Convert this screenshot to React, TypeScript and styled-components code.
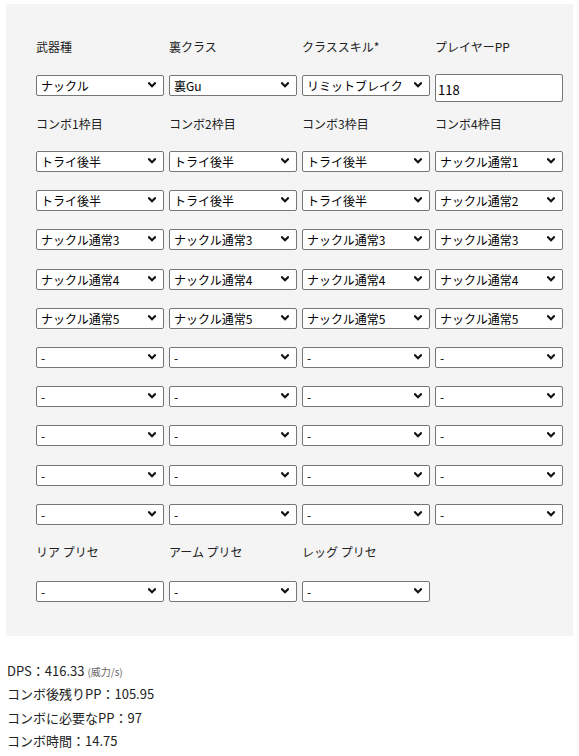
import React from "react";
import styled, { createGlobalStyle } from "styled-components";

const GlobalStyle = createGlobalStyle`
  html, body {
    margin: 0;
    padding: 0;
    background: #ffffff;
  }
  body {
    font-family: "Noto Sans CJK JP", "Noto Sans", sans-serif;
    font-size: 13px;
    color: #222;
  }
`;

const Page = styled.div`
  padding: 4px 6px 0 6px;
`;

const Panel = styled.div`
  width: 567px;
  box-sizing: border-box;
  background: #f4f4f4;
  padding: 24px 0 23px 30px;
`;

const Row = styled.div<{ $h: number }>`
  display: grid;
  grid-template-columns: repeat(4, 133px);
  height: ${(p) => p.$h}px;
  align-items: center;
`;

const Label = styled.div`
  font-size: 12px;
  line-height: 16px;
  color: #222;
  white-space: nowrap;
`;

const SelectWrap = styled.div`
  position: relative;
  width: 128px;
  height: 21px;
`;

const Select = styled.select`
  appearance: none;
  -webkit-appearance: none;
  width: 128px;
  height: 21px;
  box-sizing: border-box;
  margin: 0;
  border: 1px solid #767676;
  border-radius: 2px;
  background: #ffffff;
  color: #000;
  font-family: "Noto Sans CJK JP", "Noto Sans", sans-serif;
  font-size: 12px;
  line-height: 19px;
  padding: 0 18px 0 4px;
  outline: none;
`;

const Chevron = styled.svg`
  position: absolute;
  right: 8px;
  top: 7px;
  pointer-events: none;
`;

const NumberInput = styled.input`
  width: 128px;
  height: 28px;
  box-sizing: border-box;
  margin: 0 0 0 0;
  border: 1px solid #767676;
  border-radius: 2px;
  background: #ffffff;
  color: #000;
  font-family: "Noto Sans CJK JP", "Noto Sans", sans-serif;
  font-size: 13px;
  padding: 4px 2px 0 2px;
  outline: none;
  position: relative;
  top: 2px;
`;

const Results = styled.div`
  padding: 23px 0 0 1px;
`;

const Line = styled.div`
  font-size: 13px;
  height: 23.4px;
  line-height: 23.4px;
  color: #222;
  white-space: nowrap;
`;

const Unit = styled.span`
  font-size: 10px;
  line-height: 0;
  color: #666;
`;

const Drop: React.FC<{ value: string }> = ({ value }) => (
  <SelectWrap>
    <Select defaultValue={value}>
      <option value={value}>{value}</option>
    </Select>
    <Chevron width="8" height="6" viewBox="0 0 8 6">
      <path d="M1 1.3 L4 4.3 L7 1.3" fill="none" stroke="#111" strokeWidth="2.2" strokeLinecap="square" />
    </Chevron>
  </SelectWrap>
);

const combos: string[][] = [
  ["トライ後半", "トライ後半", "トライ後半", "ナックル通常1"],
  ["トライ後半", "トライ後半", "トライ後半", "ナックル通常2"],
  ["ナックル通常3", "ナックル通常3", "ナックル通常3", "ナックル通常3"],
  ["ナックル通常4", "ナックル通常4", "ナックル通常4", "ナックル通常4"],
  ["ナックル通常5", "ナックル通常5", "ナックル通常5", "ナックル通常5"],
  ["-", "-", "-", "-"],
  ["-", "-", "-", "-"],
  ["-", "-", "-", "-"],
  ["-", "-", "-", "-"],
  ["-", "-", "-", "-"],
];

export default function App() {
  return (
    <>
      <GlobalStyle />
      <Page>
        <Panel>
          <Row $h={38}>
            <Label>武器種</Label>
            <Label>裏クラス</Label>
            <Label>クラススキル*</Label>
            <Label>プレイヤーPP</Label>
          </Row>
          <Row $h={39}>
            <Drop value="ナックル" />
            <Drop value="裏Gu" />
            <Drop value="リミットブレイク" />
            <NumberInput type="text" defaultValue="118" />
          </Row>
          <Row $h={37}>
            <Label>コンボ1枠目</Label>
            <Label>コンボ2枠目</Label>
            <Label>コンボ3枠目</Label>
            <Label>コンボ4枠目</Label>
          </Row>
          {combos.map((r, i) => (
            <Row $h={39.2} key={i}>
              {r.map((v, j) => (
                <Drop value={v} key={j} />
              ))}
            </Row>
          ))}
          <Row $h={37}>
            <Label>リア プリセ</Label>
            <Label>アーム プリセ</Label>
            <Label>レッグ プリセ</Label>
          </Row>
          <Row $h={42}>
            <Drop value="-" />
            <Drop value="-" />
            <Drop value="-" />
          </Row>
        </Panel>
        <Results>
          <Line>
            DPS：416.33 <Unit>(威力/s)</Unit>
          </Line>
          <Line>コンボ後残りPP：105.95</Line>
          <Line>コンボに必要なPP：97</Line>
          <Line>コンボ時間：14.75</Line>
        </Results>
      </Page>
    </>
  );
}
